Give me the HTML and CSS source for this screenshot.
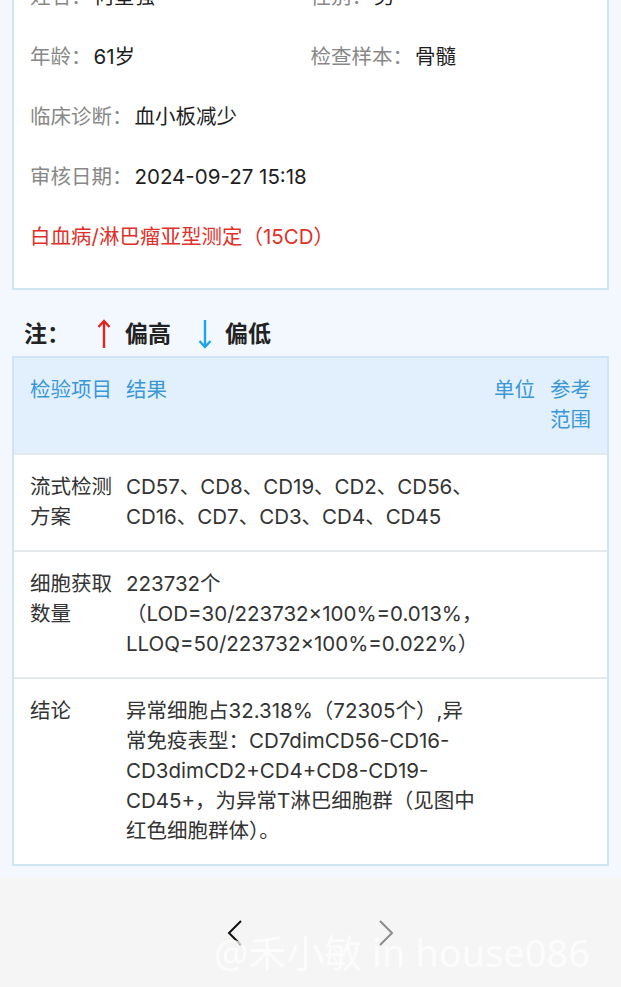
FILE: index.html
```html
<!doctype html>
<html>
<head>
	<meta charset="utf-8">
	<title>检验报告</title>
	<link rel="stylesheet" href="styles.css">
</head>
<body>
<div class="page">
	<div class="card info">
		<div class="field"><span class="label">姓名：</span><span class="value">何星强</span></div>
		<div class="field"><span class="label">性别：</span><span class="value">男</span></div>
		<div class="field"><span class="label">年龄：</span><span class="value">61岁</span></div>
		<div class="field"><span class="label">检查样本：</span><span class="value">骨髓</span></div>
		<div class="field wide"><span class="label">临床诊断：</span><span class="value">血小板减少</span></div>
		<div class="field wide"><span class="label">审核日期：</span><span class="value">2024-09-27 15:18</span></div>
		<div class="field wide title">白血病/淋巴瘤亚型测定（15CD）</div>
	</div>

	<div class="legend">
		<span class="legend-note">注：</span>
		<svg class="arrow" width="14" height="30" viewBox="0 0 14 30"><path d="M7 29V2M1.5 8L7 2l5.5 6" fill="none" stroke="#e02424" stroke-width="2.4"/></svg>
		<span class="legend-text">偏高</span>
		<svg class="arrow arrow-down" width="14" height="30" viewBox="0 0 14 30"><path d="M7 1v27M1.5 22L7 28l5.5-6" fill="none" stroke="#1ea3e6" stroke-width="2.4"/></svg>
		<span class="legend-text">偏低</span>
	</div>

	<div class="card results">
		<div class="row head">
			<div>检验项目</div>
			<div>结果</div>
			<div>单位</div>
			<div>参考范围</div>
		</div>
		<div class="row">
			<div>流式检测方案</div>
			<div>CD57、CD8、CD19、CD2、CD56、CD16、CD7、CD3、CD4、CD45</div>
			<div></div>
			<div></div>
		</div>
		<div class="row">
			<div>细胞获取数量</div>
			<div>223732个（LOD=30/223732×100%=0.013%，LLOQ=50/223732×100%=0.022%）</div>
			<div></div>
			<div></div>
		</div>
		<div class="row">
			<div>结论</div>
			<div>异常细胞占32.318%（72305个）,异常免疫表型：CD7dimCD56-CD16-CD3dimCD2+CD4+CD8-CD19-CD45+，为异常T淋巴细胞群（见图中红色细胞群体）。</div>
			<div></div>
			<div></div>
		</div>
	</div>
</div>

<div class="pager">
	<svg class="chevron" width="16" height="28" viewBox="0 0 16 28"><path d="M14 2L2 14l12 12" fill="none" stroke="#111" stroke-width="2"/></svg>
	<svg class="chevron" width="16" height="28" viewBox="0 0 16 28"><path d="M2 2l12 12L2 26" fill="none" stroke="#8c8c8c" stroke-width="2"/></svg>
	<div class="watermark">@禾小敏 in house086</div>
</div>
</body>
</html>
```

FILE: styles.css
```css
* {
    margin: 0;
    padding: 0;
    box-sizing: border-box;
}

html, body {
    background: #f2f8fe;
}

body {
    font: 20.5px/30px Inter, "Noto Sans CJK SC", sans-serif;
    color: #1e1e1e;
    overflow: hidden;
}

.page {
    padding: 0 12px 11px;
}

.card {
    background: #fff;
    border: 2px solid #cfe4f5;
}

.info {
    margin-top: -40px;
    padding: 20px 16px 36px;
    display: grid;
    grid-template-columns: 1fr 1fr;
    row-gap: 30px;
}

.field.wide {
    grid-column: 1 / 3;
}

.label {
    color: #888;
}

.value {
    margin-left: 2px;
}

.title {
    color: #e0302a;
}

.legend {
    display: flex;
    align-items: center;
    margin: 29px 0 7px 12px;
    height: 30px;
    font-size: 23px;
    font-weight: bold;
    color: #222;
}

.legend-note {
    margin-right: 27px;
}

.arrow {
    margin-right: 14px;
}

.legend-text + .arrow {
    margin-left: 27px;
    margin-right: 13px;
}

.results .row {
    display: grid;
    grid-template-columns: 84px 1fr 44px 42px;
    column-gap: 12px;
    padding: 17px 15px 18px 16px;
    border-top: 2px solid #e6e9ec;
    color: #333;
}

.results .head {
    background: #e1f0fc;
    color: #3a97d8;
    border-top: none;
}

.pager {
    position: relative;
    height: 112px;
    background: #f5f5f5;
    display: flex;
    justify-content: center;
    align-items: center;
    gap: 135px;
}

.watermark {
    position: absolute;
    left: 214px;
    top: 46px;
    font: 38px "Noto Sans", "Noto Sans CJK SC", sans-serif;
    color: rgba(255, 255, 255, 0.75);
    white-space: nowrap;
}
```
